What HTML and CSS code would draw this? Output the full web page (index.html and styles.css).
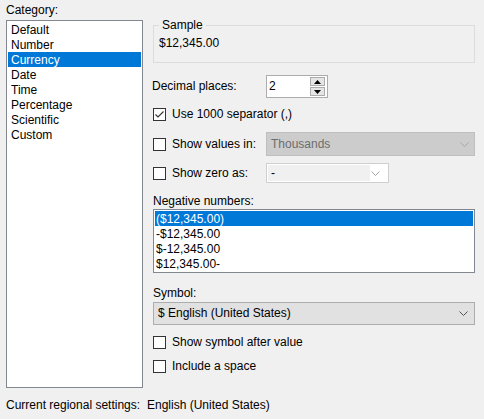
FILE: index.html
```html
<!DOCTYPE html>
<html>
<head>
<meta charset="utf-8">
<link rel="stylesheet" href="styles.css">
</head>
<body>
<div class="dialog">
  <div class="main">
    <div class="left">
      <div class="label">Category:</div>
      <div class="list cat-list">
        <div class="item">Default</div>
        <div class="item">Number</div>
        <div class="item sel">Currency</div>
        <div class="item">Date</div>
        <div class="item">Time</div>
        <div class="item">Percentage</div>
        <div class="item">Scientific</div>
        <div class="item">Custom</div>
      </div>
    </div>
    <div class="right">
      <fieldset class="sample">
        <legend>Sample</legend>
        <div class="sample-value">$12,345.00</div>
      </fieldset>

      <div class="row decimal-row">
        <div class="dec-label">Decimal places:</div>
        <div class="spin">
          <div class="spin-text">2</div>
          <div class="spin-btns">
            <div class="spin-btn"><svg width="7" height="4" viewBox="0 0 7 4"><polygon points="3.5,0 7,4 0,4" fill="#000"/></svg></div>
            <div class="spin-btn"><svg width="7" height="4" viewBox="0 0 7 4"><polygon points="0,0 7,0 3.5,4" fill="#000"/></svg></div>
          </div>
        </div>
      </div>

      <div class="row check-row r-sep">
        <span class="cb checked"><svg width="11" height="11" viewBox="0 0 11 11"><polyline points="1.5,5.5 4,8 9.5,2.5" fill="none" stroke="#333" stroke-width="1.1"/></svg></span>
        <span class="cb-text">Use 1000 separator (,)</span>
      </div>

      <div class="row r-values">
        <div class="cb-wrap">
          <span class="cb"></span>
          <span class="cb-text">Show values in:</span>
        </div>
        <div class="combo disabled">
          <span class="combo-text">Thousands</span>
          <svg class="chev" width="9" height="5" viewBox="0 0 9 5"><polyline points="0.5,0.5 4.5,4.5 8.5,0.5" fill="none" stroke="#a8a8a8" stroke-width="1"/></svg>
        </div>
      </div>

      <div class="row r-zero">
        <div class="cb-wrap">
          <span class="cb"></span>
          <span class="cb-text">Show zero as:</span>
        </div>
        <div class="combo zero">
          <span class="zero-field">-</span>
          <svg class="chev" width="9" height="5" viewBox="0 0 9 5"><polyline points="0.5,0.5 4.5,4.5 8.5,0.5" fill="none" stroke="#a8a8a8" stroke-width="1"/></svg>
        </div>
      </div>

      <div class="label neg-label">Negative numbers:</div>
      <div class="list neg-list">
        <div class="item sel">($12,345.00)</div>
        <div class="item">-$12,345.00</div>
        <div class="item">$-12,345.00</div>
        <div class="item">$12,345.00-</div>
      </div>

      <div class="label sym-label">Symbol:</div>
      <div class="combo symbol">
        <span class="combo-text">$ English (United States)</span>
        <svg class="chev" width="9" height="5" viewBox="0 0 9 5"><polyline points="0.5,0.5 4.5,4.5 8.5,0.5" fill="none" stroke="#555" stroke-width="1"/></svg>
      </div>

      <div class="row check-row r-after">
        <span class="cb"></span>
        <span class="cb-text">Show symbol after value</span>
      </div>
      <div class="row check-row r-space">
        <span class="cb"></span>
        <span class="cb-text">Include a space</span>
      </div>
    </div>
  </div>
  <div class="footer">
    <span class="foot-label">Current regional settings:</span>
    <span>English (United States)</span>
  </div>
</div>
</body>
</html>
```

FILE: styles.css
```css
* { box-sizing: border-box; }
html, body {
  margin: 0;
  padding: 0;
  background: #f0f0f0;
}
body {
  font-family: "Liberation Sans", Arial, sans-serif;
  font-size: 12px;
  line-height: 15px;
  color: #000;
  width: 484px;
  height: 419px;
  overflow: hidden;
}
.dialog {
  padding: 3px 0 0 6px;
  display: flex;
  flex-direction: column;
}
.main {
  display: flex;
}
.left {
  width: 137px;
  display: flex;
  flex-direction: column;
}
.label {
  height: 15px;
}
.list {
  background: #fff;
  border: 1px solid #828790;
  padding: 1px;
}
.cat-list {
  margin-top: 2px;
  height: 368px;
}
.item {
  height: 15px;
  line-height: 13px;
  padding: 2px 0 0 3px;
  white-space: nowrap;
}
.item.sel {
  background: #0078d7;
  color: #fff;
}
.right {
  margin-left: 10px;
  width: 322px;
  display: flex;
  flex-direction: column;
}
.sample {
  margin: 15px 0 0 0;
  border: 1px solid #dcdcdc;
  padding: 4px 0 11px 5px;
  min-width: 0;
}
.sample legend {
  padding: 0 3px;
  line-height: 14px;
}
.row {
  display: flex;
  align-items: center;
}
.decimal-row {
  margin-top: 12px;
  height: 23px;
}
.dec-label {
  width: 114px;
  margin-left: -1px;
}
.spin {
  width: 62px;
  height: 23px;
  border: 1px solid #acacac;
  background: #fff;
  display: flex;
  align-items: center;
  justify-content: space-between;
  padding: 0 1px 0 2px;
}
.spin-text {
  line-height: 15px;
}
.spin-btns {
  display: flex;
  flex-direction: column;
  gap: 1px;
  margin-right: 1px;
}
.spin-btn {
  width: 15px;
  height: 9px;
  background: #e5e5e5;
  border: 1px solid #acacac;
  display: flex;
  align-items: center;
  justify-content: center;
}
.spin-btn svg { display: block; }
.check-row {
  height: 15px;
}
.r-sep { margin-top: 9px; }
.cb {
  width: 13px;
  height: 13px;
  border: 1px solid #333;
  background: #fff;
  display: flex;
  align-items: center;
  justify-content: center;
  flex: none;
}
.cb svg { display: block; }
.cb-text {
  margin-left: 6px;
  white-space: nowrap;
}
.cb-wrap {
  width: 113px;
  display: flex;
  align-items: center;
}
.r-values {
  margin-top: 10px;
  height: 24px;
}
.combo {
  display: flex;
  align-items: center;
  justify-content: space-between;
  border: 1px solid #adadad;
}
.combo .chev { display: block; flex: none; }
.combo.disabled {
  width: 209px;
  height: 24px;
  background: #cccccc;
  border-color: #bfbfbf;
  padding: 0 5px 0 4px;
  color: #6d6d6d;
}
.r-zero {
  margin-top: 7px;
  height: 20px;
}
.combo.zero {
  width: 123px;
  height: 20px;
  background: #fff;
  border-color: #cfcfcf;
  padding: 1px 8px 1px 1px;
}
.zero-field {
  width: 102px;
  height: 16px;
  background: #f0f0f0;
  padding-left: 3px;
  line-height: 16px;
}
.neg-label { margin-top: 11px; }
.neg-list {
  height: 64px;
  padding: 1px;
}
.neg-list .item {
  padding-left: 1px;
}
.sym-label { margin-top: 13px; }
.combo.symbol {
  margin-top: 1px;
  height: 23px;
  background: #e1e1e1;
  padding: 0 6px 0 4px;
}
.r-after { margin-top: 10px; }
.r-space { margin-top: 9px; }
.footer {
  margin-top: 10px;
  display: flex;
  white-space: nowrap;
}
.foot-label {
  width: 141px;
}
```
